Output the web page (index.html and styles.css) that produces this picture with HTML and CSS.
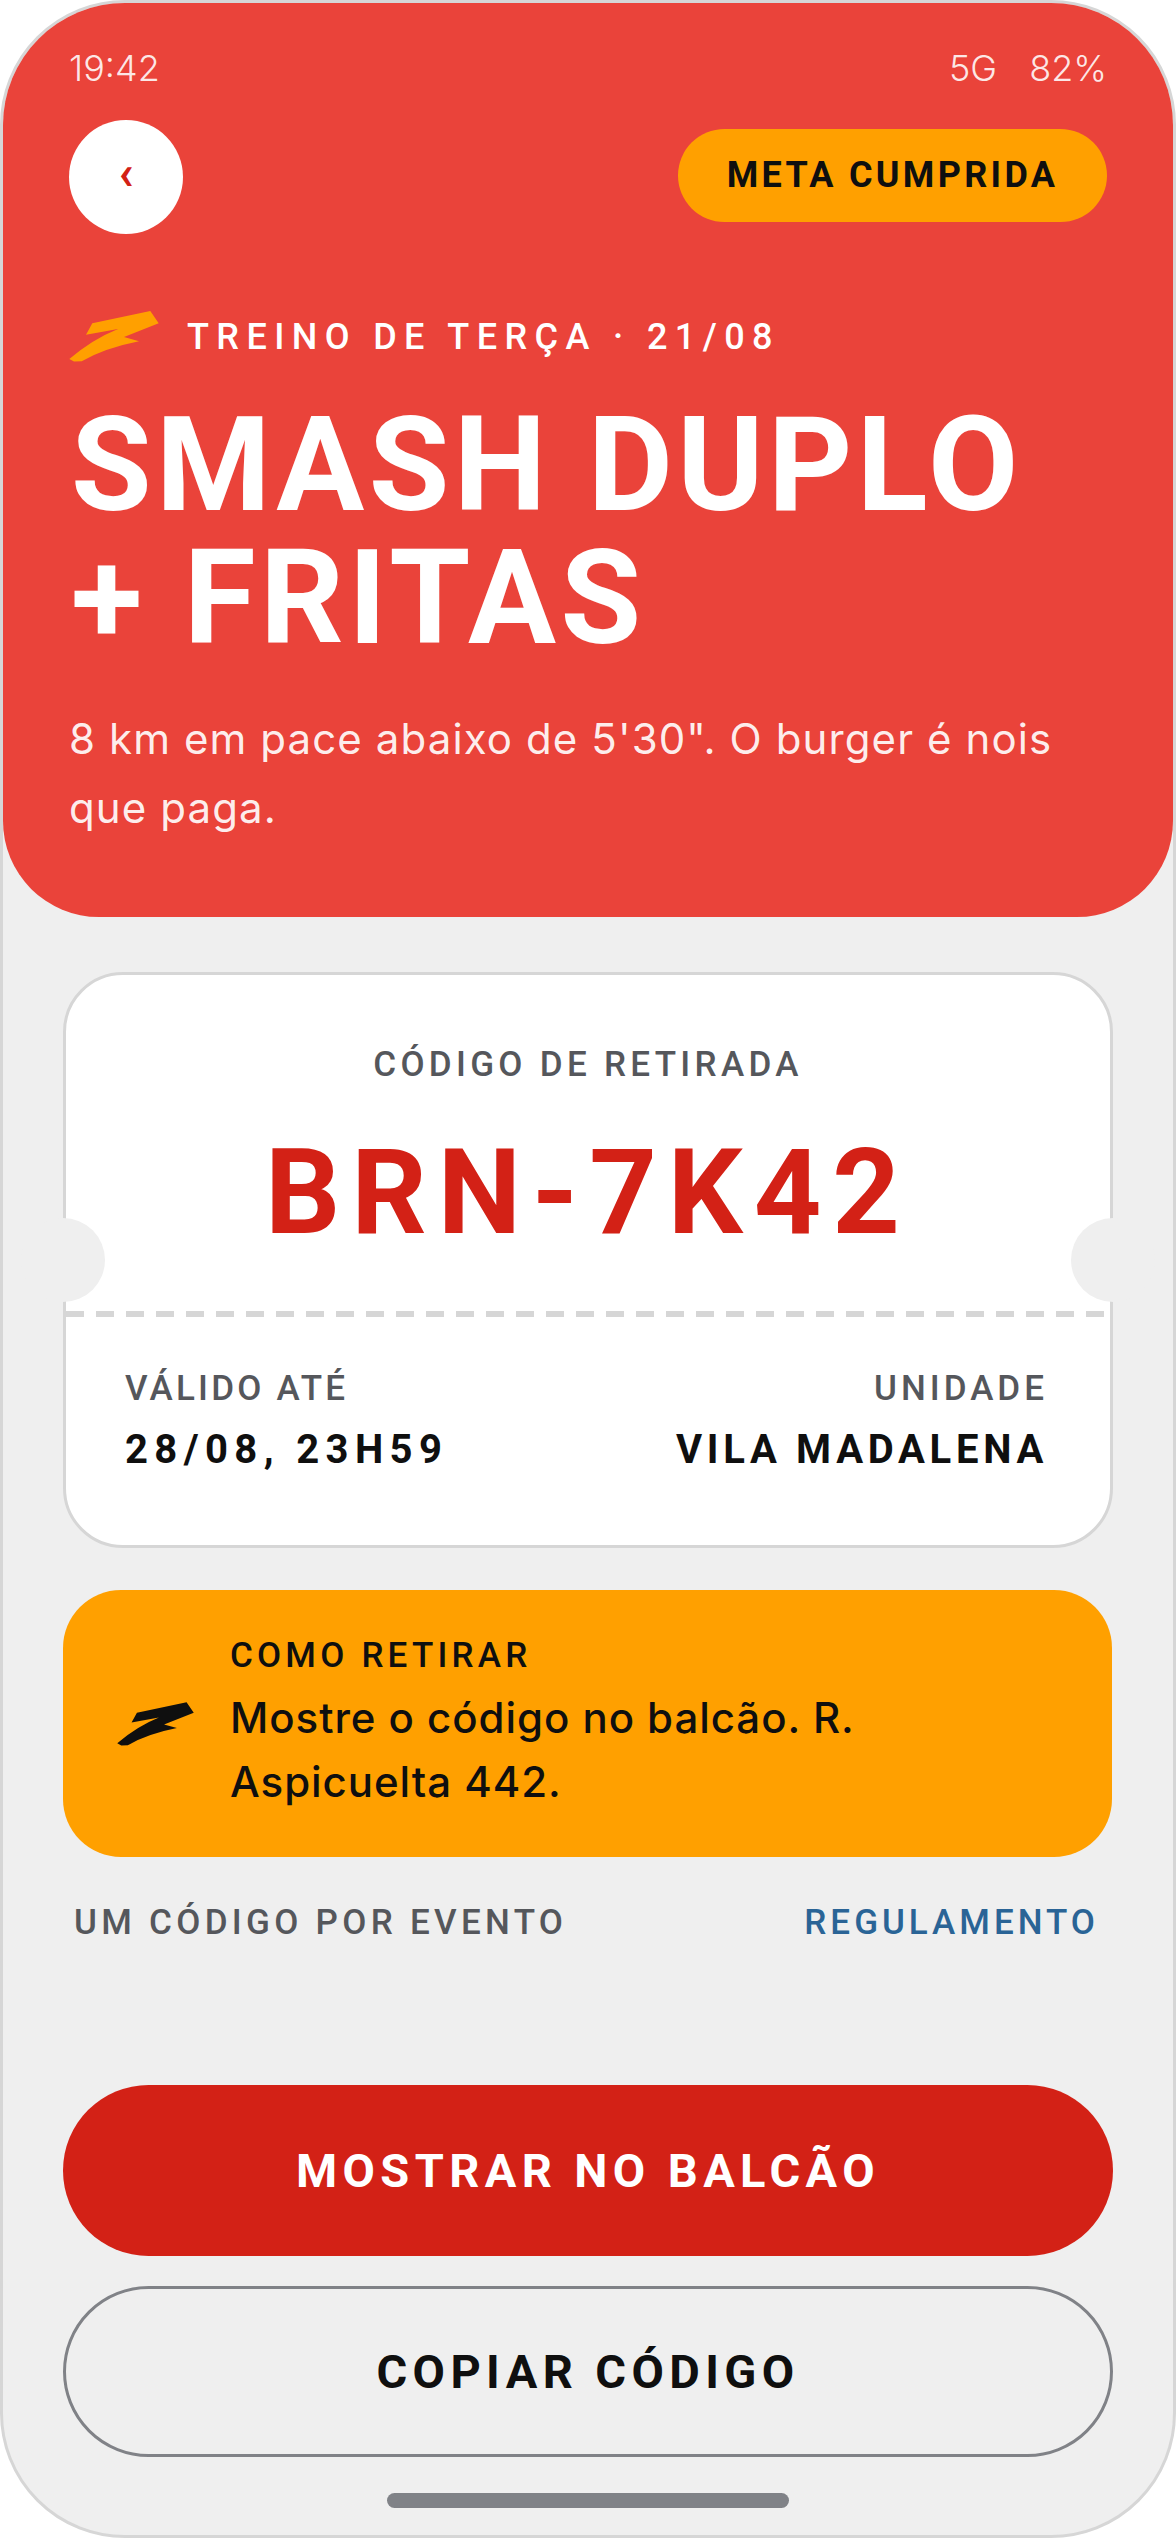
FILE: index.html
```html
<!DOCTYPE html>
<html lang="pt-BR">
<head>
    <meta charset="UTF-8">
    <meta name="viewport" content="width=device-width, initial-scale=1.0">
    <title>Smash duplo + fritas</title>
    <link rel="stylesheet" href="styles.css">
</head>
<body>
    <div class="screen">
        <!-- Red header -->
        <header class="hero">
            <div class="status">
                <span>19:42</span>
                <div class="status-right"><span>5G</span><span>82%</span></div>
            </div>
            <div class="topbar">
                <button class="back" type="button">‹</button>
                <span class="pill">META CUMPRIDA</span>
            </div>
            <div class="eyebrow">
                <svg class="bolt" viewBox="0 0 90 51"><path d="M23.3 12.3L81.3 0L89.7 12.3L55 26L70 30.3Q36 37 12.7 50.3L5 50.5L0.3 48Q24 28 49 18L17 23.7Z"/></svg>
                <span>TREINO DE TERÇA · 21/08</span>
            </div>
            <h1 class="title">SMASH DUPLO<br>+ FRITAS</h1>
            <p class="sub">8 km em pace abaixo de 5'30". O burger é nois<br>que paga.</p>
        </header>

        <!-- Ticket -->
        <section class="ticket">
            <div class="ticket-top">
                <div class="label code-label">CÓDIGO DE RETIRADA</div>
                <div class="code">BRN-7K42</div>
            </div>
            <div class="notch notch-left"></div>
            <div class="notch notch-right"></div>
            <div class="dashes"></div>
            <div class="ticket-bottom">
                <div>
                    <div class="label valid-label">VÁLIDO ATÉ</div>
                    <div class="value valid-value">28/08, 23H59</div>
                </div>
                <div class="right">
                    <div class="label unit-label">UNIDADE</div>
                    <div class="value unit-value">VILA MADALENA</div>
                </div>
            </div>
        </section>

        <section class="info">
            <svg class="bolt bolt-dark" viewBox="0 0 90 51"><path d="M23.3 12.3L81.3 0L89.7 12.3L55 26L70 30.3Q36 37 12.7 50.3L5 50.5L0.3 48Q24 28 49 18L17 23.7Z"/></svg>
            <div>
                <div class="label info-label">COMO RETIRAR</div>
                <p class="info-text">Mostre o código no balcão. R.<br>Aspicuelta 442.</p>
            </div>
        </section>

        <div class="foot">
            <span class="label foot-label">UM CÓDIGO POR EVENTO</span>
            <a class="label foot-link">REGULAMENTO</a>
        </div>

        <button class="btn btn-red" type="button">MOSTRAR NO BALCÃO</button>
        <button class="btn btn-line" type="button">COPIAR CÓDIGO</button>
        <div class="home-bar"></div>
    </div>
</body>
</html>
```

FILE: styles.css
```css
* {
    box-sizing: border-box;
}

body {
    margin: 0;
    background-color: #fff;
    font-family: "Roboto", sans-serif;
}

.screen {
    display: flex;
    flex-direction: column;
    width: 1176px;
    height: 2538px;
    border: 3px solid #d6d6d6;
    border-radius: 125px;
    overflow: hidden;
    background-color: #efefef;
}

/* Header */
.hero {
    flex: none;
    height: 914px;
    padding: 45px 66px 0;
    background-color: #ea433a;
    border-radius: 0 0 96px 96px;
    color: #fff;
}

.status {
    display: flex;
    justify-content: space-between;
    height: 40px;
    font-family: "Inter", sans-serif;
    font-size: 36px;
    font-weight: 300;
    line-height: 40px;
    color: rgba(255, 255, 255, 0.88);
}

.status-right {
    display: flex;
    gap: 32px;
}

.topbar {
    display: flex;
    justify-content: space-between;
    align-items: flex-start;
    margin-top: 32px;
}

.back {
    width: 114px;
    height: 114px;
    padding: 0 0 8px;
    border: 0;
    border-radius: 50%;
    background-color: #fff;
    color: #d32116;
    font-family: "Roboto", sans-serif;
    font-size: 48px;
    font-weight: 700;
    line-height: 1;
}

.pill {
    margin-top: 9px;
    width: 429px;
    height: 93px;
    border-radius: 47px;
    background-color: #ffa000;
    color: #0f0f0f;
    font-size: 36px;
    font-weight: 700;
    line-height: 93px;
    letter-spacing: 3.3px;
    text-align: center;
}

.eyebrow {
    display: flex;
    align-items: center;
    gap: 28px;
    margin-top: 77px;
    margin-bottom: 37px;
    font-size: 36px;
    font-weight: 500;
    letter-spacing: 7.4px;
}

.bolt {
    flex: none;
    width: 90px;
    height: 51px;
    fill: #ffa000;
}

.title {
    margin: 0 0 0 2px;
    font-size: 131px;
    font-weight: 700;
    line-height: 133px;
    letter-spacing: 4.4px;
}

.sub {
    margin: 39px 0 0;
    font-family: "Inter", sans-serif;
    font-size: 42px;
    font-weight: 400;
    line-height: 69px;
    letter-spacing: 1.1px;
    color: rgba(255, 255, 255, 0.92);
}

/* Ticket */
.ticket {
    position: relative;
    flex: none;
    height: 576px;
    margin: 55px 60px 0;
    border: 3px solid #d6d6d6;
    border-radius: 60px;
    background-color: #fff;
}

.ticket-top {
    height: 336px;
    padding-top: 68px;
    text-align: center;
}

.label {
    font-size: 35px;
    font-weight: 500;
    line-height: 44px;
    color: #55575c;
}

.code-label {
    letter-spacing: 4.3px;
}

.code {
    margin-top: 47px;
    font-size: 118px;
    font-weight: 700;
    line-height: 118px;
    letter-spacing: 10.9px;
    color: #d32116;
}

.notch {
    position: absolute;
    top: 243px;
    width: 84px;
    height: 84px;
    border-radius: 50%;
    background-color: #efefef;
}

.notch-left {
    left: -45px;
}

.notch-right {
    right: -45px;
}

.dashes {
    height: 6px;
    background-image: repeating-linear-gradient(90deg, #d6d6d6 0, #d6d6d6 18px, transparent 18px, transparent 30px);
}

.ticket-bottom {
    display: flex;
    justify-content: space-between;
    padding: 50px 62px 0 59px;
}

.right {
    text-align: right;
}

.valid-label {
    letter-spacing: 3.2px;
}

.unit-label {
    letter-spacing: 4px;
}

.value {
    margin-top: 15px;
    font-size: 40px;
    font-weight: 700;
    line-height: 48px;
    color: #0f0f0f;
}

.valid-value {
    letter-spacing: 6.4px;
}

.unit-value {
    letter-spacing: 4.7px;
}

/* Orange card */
.info {
    display: flex;
    align-items: center;
    flex: none;
    gap: 36px;
    height: 267px;
    margin: 42px 61px 0 60px;
    padding-left: 54px;
    border-radius: 58px;
    background-color: #ffa000;
}

.bolt-dark {
    width: 77px;
    height: 44px;
    fill: #0f0f0f;
}

.info-label {
    color: #0f0f0f;
    letter-spacing: 4.2px;
}

.info-text {
    margin: 8px 0 0;
    font-family: "Inter", sans-serif;
    font-size: 42px;
    font-weight: 500;
    line-height: 64px;
    letter-spacing: 0.95px;
    color: #0f0f0f;
}

.foot {
    display: flex;
    justify-content: space-between;
    margin: 44px 74px 0 71px;
}

.foot-label {
    letter-spacing: 4.3px;
}

.foot-link {
    letter-spacing: 4px;
    color: #2a6496;
}

/* Buttons */
.btn {
    flex: none;
    height: 171px;
    margin: 0 60px;
    border-radius: 86px;
    font-family: "Roboto", sans-serif;
    font-size: 47px;
    font-weight: 700;
    letter-spacing: 5.4px;
}

.btn-red {
    margin-top: 140px;
    border: 0;
    background-color: #d32116;
    color: #fff;
}

.btn-line {
    margin-top: 30px;
    border: 3px solid #808287;
    background: none;
    color: #0f0f0f;
}

.home-bar {
    flex: none;
    align-self: center;
    width: 402px;
    height: 15px;
    margin-top: 36px;
    border-radius: 8px;
    background-color: #808287;
}
```
